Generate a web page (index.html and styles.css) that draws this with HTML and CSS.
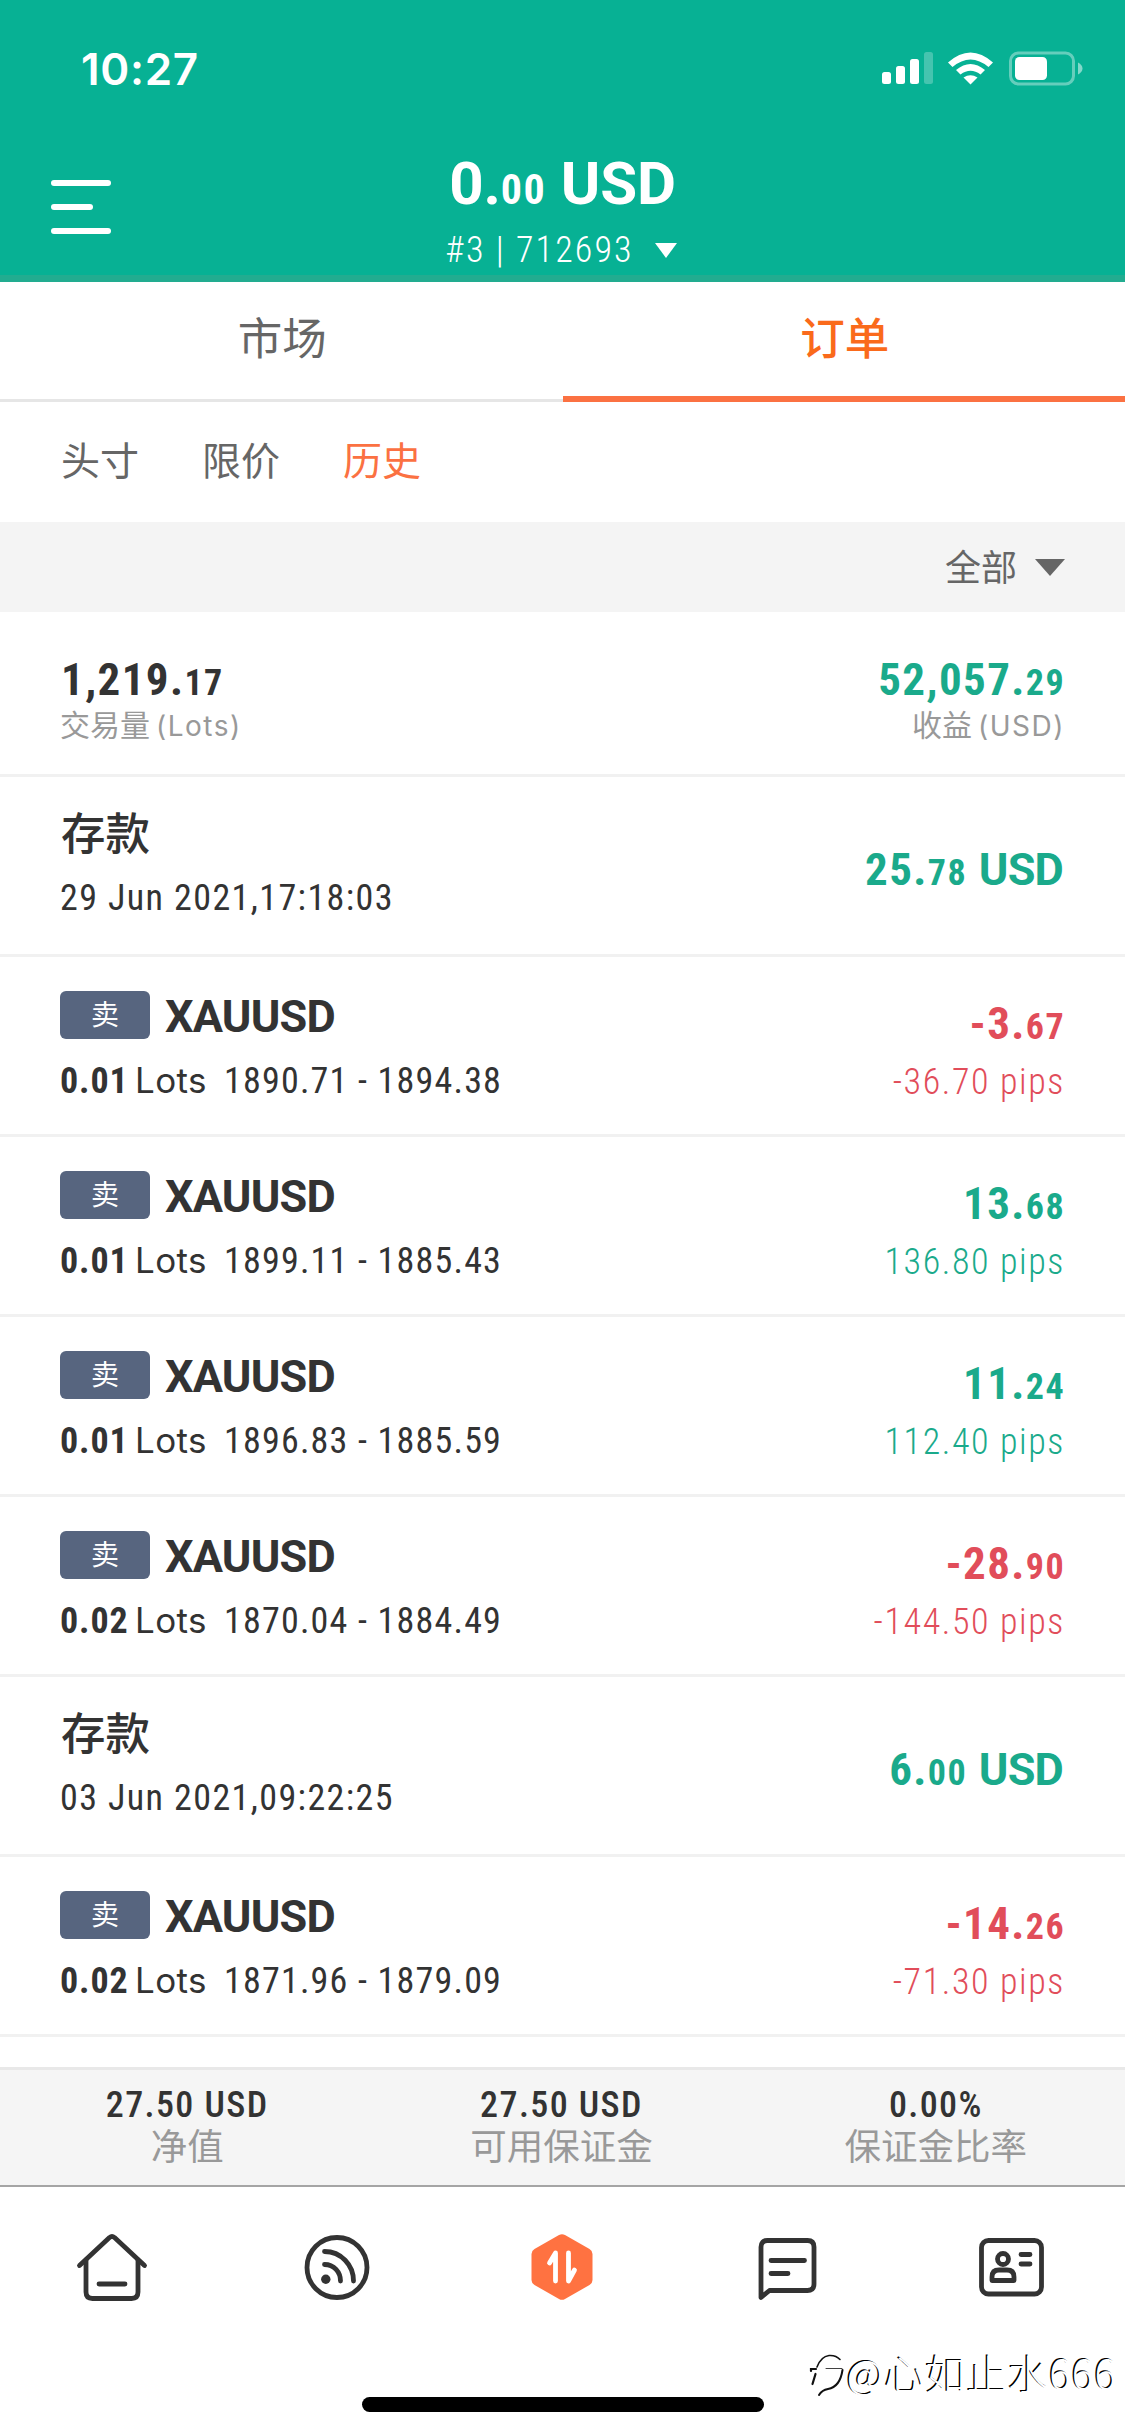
FILE: index.html
```html
<!DOCTYPE html>
<html lang="zh-CN">
<head>
<meta charset="utf-8">
<title>订单</title>
<link rel="stylesheet" href="styles.css">
</head>
<body>
<div class="app">
  <header class="header">
    <div class="status">
      <span class="clock">10:27</span>
      <svg class="status-icons" width="204" height="36" viewBox="0 0 204 36" fill="#fff">
        <rect x="2" y="21" width="9" height="12" rx="2.5"/>
        <rect x="16" y="15" width="9" height="18" rx="2.5"/>
        <rect x="30" y="8" width="9" height="25" rx="2.5"/>
        <rect x="44" y="1" width="9" height="32" rx="2.5" opacity=".25"/>
        <path d="M68 11.500Q90.500-8.500 113 11.500L108.500 16Q90.500 1 72.500 16Z"/>
        <path d="M76 19Q90.500 7 105 19L100.500 23.500Q90.500 16 80.500 23.500Z"/>
        <path d="M83.500 26.500Q90.500 22 97.500 26.500L90.500 33.500Z"/>
        <rect x="130.500" y="2" width="63" height="31" rx="8" fill="none" stroke="#fff" stroke-width="3" opacity=".38"/>
        <rect x="135" y="6" width="32" height="23" rx="4.500"/>
        <path d="M198 11.500Q202.500 14 202.500 17.500T198 23.500Z" opacity=".5"/>
      </svg>
    </div>
    <div class="topbar">
      <div class="menu"><i></i><i></i><i></i></div>
      <div class="account">
        <div class="balance">0.<small>00</small> USD</div>
        <div class="account-id"><span>#3 | 712693</span>
          <svg width="22" height="15" viewBox="0 0 22 15"><path d="M0 0H22L11 15Z" fill="#fff"/></svg>
        </div>
      </div>
    </div>
  </header>

  <nav class="tabs">
    <div class="tab">市场</div>
    <div class="tab active">订单</div>
  </nav>
  <nav class="subtabs"><span>头寸</span><span>限价</span><span class="active">历史</span></nav>
  <div class="filter"><span>全部</span>
    <svg width="30" height="17" viewBox="0 0 30 17"><path d="M0 0H30L15 17Z" fill="#666"/></svg>
  </div>

  <section class="summary">
    <div>
      <div class="amount">1,219.<small>17</small></div>
      <div class="caption">交易量<span>(Lots)</span></div>
    </div>
    <div class="right">
      <div class="amount up">52,057.<small>29</small></div>
      <div class="caption">收益<span>(USD)</span></div>
    </div>
  </section>

  <section class="list">
    <article class="row">
      <div>
        <div class="deposit">存款</div>
        <div class="date">29 Jun 2021,17:18:03</div>
      </div>
      <div class="amount up money">25.<small>78</small> <span>USD</span></div>
    </article>
    <article class="row">
      <div>
        <div class="symbol"><span class="badge">卖</span>XAUUSD</div>
        <div class="detail"><b>0.01</b><span class="lots">Lots</span><span>1890.71 - 1894.38</span></div>
      </div>
      <div class="right result down"><div class="amount">-3.<small>67</small></div><div class="pips">-36.70 pips</div></div>
    </article>
    <article class="row">
      <div>
        <div class="symbol"><span class="badge">卖</span>XAUUSD</div>
        <div class="detail"><b>0.01</b><span class="lots">Lots</span><span>1899.11 - 1885.43</span></div>
      </div>
      <div class="right result up"><div class="amount">13.<small>68</small></div><div class="pips">136.80 pips</div></div>
    </article>
    <article class="row">
      <div>
        <div class="symbol"><span class="badge">卖</span>XAUUSD</div>
        <div class="detail"><b>0.01</b><span class="lots">Lots</span><span>1896.83 - 1885.59</span></div>
      </div>
      <div class="right result up"><div class="amount">11.<small>24</small></div><div class="pips">112.40 pips</div></div>
    </article>
    <article class="row">
      <div>
        <div class="symbol"><span class="badge">卖</span>XAUUSD</div>
        <div class="detail"><b>0.02</b><span class="lots">Lots</span><span>1870.04 - 1884.49</span></div>
      </div>
      <div class="right result down"><div class="amount">-28.<small>90</small></div><div class="pips">-144.50 pips</div></div>
    </article>
    <article class="row">
      <div>
        <div class="deposit">存款</div>
        <div class="date">03 Jun 2021,09:22:25</div>
      </div>
      <div class="amount up money">6.<small>00</small> <span>USD</span></div>
    </article>
    <article class="row">
      <div>
        <div class="symbol"><span class="badge">卖</span>XAUUSD</div>
        <div class="detail"><b>0.02</b><span class="lots">Lots</span><span>1871.96 - 1879.09</span></div>
      </div>
      <div class="right result down"><div class="amount">-14.<small>26</small></div><div class="pips">-71.30 pips</div></div>
    </article>
  </section>

  <section class="equity">
    <div><b>27.50 USD</b><span>净值</span></div>
    <div><b>27.50 USD</b><span>可用保证金</span></div>
    <div><b>0.00%</b><span>保证金比率</span></div>
  </section>

  <nav class="bottom">
    <svg width="80" height="80" viewBox="0 0 80 80" class="icon">
      <path d="M7.500 33.500L37.500 5.500Q40 3.500 42.500 5.500L72.500 33.500"/>
      <path d="M14 28V60Q14 66.500 20.500 66.500H59.500Q66 66.500 66 60V28"/>
      <path d="M27 52H53"/>
    </svg>
    <svg width="80" height="80" viewBox="0 0 80 80" class="icon">
      <circle cx="40" cy="35.500" r="30"/>
      <path d="M27.500 19.500C44 19.500 56.500 33 56.500 49"/>
      <path d="M27.500 32.500C37 32.500 43.500 40 43.500 49"/>
      <circle cx="28.800" cy="47.200" r="4.700" class="solid"/>
    </svg>
    <svg width="80" height="80" viewBox="0 0 80 80" class="icon">
      <path class="hex" d="M37 3Q40 1.300 43 3L67.500 17Q70.500 18.800 70.500 22V48Q70.500 51.200 67.500 53L43 67Q40 68.700 37 67L12.500 53Q9.500 51.200 9.500 48V22Q9.500 18.800 12.500 17Z"/>
      <path class="arrows" d="M33.500 49V21L27.500 31M46.500 21V49L52.500 38"/>
    </svg>
    <svg width="80" height="80" viewBox="0 0 80 80" class="icon">
      <path d="M14 65.500V15Q14 8.500 20.500 8.500H60.500Q67 8.500 67 15V52Q67 58.500 60.500 58.500H22.500Z"/>
      <path d="M24 28.500H57.500M24 41.500H41"/>
    </svg>
    <svg width="80" height="80" viewBox="0 0 80 80" class="icon">
      <rect x="9.500" y="8.500" width="60" height="53.500" rx="7"/>
      <circle cx="31" cy="27" r="5.500"/>
      <path d="M20 48.500V45Q20 38 27 38H35Q42 38 42 45V48.500Z"/>
      <path d="M49 22.500H58M49 32H58"/>
    </svg>
  </nav>
  <div class="home-bar"></div>

  <div class="watermark">
    <svg width="36" height="46" viewBox="0 0 36 46" fill="none" stroke="#111" stroke-linecap="round">
      <path d="M2 18V16H7" stroke-width="2.200"/>
      <path d="M8 14Q12 3.500 20 2.500Q27 2 31 6.500" stroke-width="1.600"/>
      <path d="M6.500 21L3.500 31" stroke-width="2.200"/>
      <path d="M17 15.500H33" stroke-width=".8"/>
      <path d="M33.500 17Q31 34 19 36Q13 37 10 42" stroke-width="2"/>
    </svg><span>@心如止水666</span>
  </div>
</div>
</body>
</html>
```
FILE: styles.css
```css
* { box-sizing: border-box; }
body {
  margin: 0;
  background: #fff;
  color: #333;
  font-family: Roboto, "Noto Sans CJK SC", sans-serif;
  font-stretch: 75%;
}
.app {
  position: relative;
  width: 1125px;
  height: 2436px;
  display: flex;
  flex-direction: column;
  overflow: hidden;
}

/* Header */
.header { height: 282px; background: #07b194; border-bottom: 7px solid #22ac90; color: #fff; }
.status { display: flex; justify-content: space-between; height: 136px; padding: 51px 41px 0 81px; }
.clock { font: 600 44px/36px Inter, sans-serif; letter-spacing: .7px; }
.topbar { display: grid; grid-template-columns: 111px 1fr 111px; }
.menu { display: flex; flex-direction: column; gap: 18px; padding: 44px 0 0 51px; }
.menu i { width: 60px; height: 6px; border-radius: 3px; background: #fff; }
.menu i:nth-child(2) { width: 42px; }
.account { display: flex; flex-direction: column; align-items: center; }
.balance { font-size: 60px; line-height: 60px; font-weight: 700; font-stretch: 100%; letter-spacing: -.2px; padding-top: 18px; }
.balance small { font-size: 42px; font-stretch: 75%; letter-spacing: 1.500px; }
.account-id { display: flex; align-items: center; gap: 21px; font-size: 36px; line-height: 40px; letter-spacing: 2.100px; font-weight: 350; padding: 10px 3px 0 0; }

/* Tabs */
.tabs { display: flex; height: 120px; border-bottom: 3px solid #e6e6e6; }
.tab { width: 50%; text-align: center; font-size: 44.500px; line-height: 117px; color: #666; padding-left: 2px; }
.tab.active { height: 120px; border-bottom: 6px solid #fb7142; color: #fa6a1b; font-weight: 500; }
.subtabs { display: flex; gap: 63px; height: 120px; padding-left: 61px; font-size: 39px; line-height: 121px; color: #666; }
.subtabs .active { color: #fb7142; }
.filter { display: flex; align-items: center; justify-content: flex-end; gap: 18px; height: 90px; padding-right: 60px; background: #f4f4f4; color: #666; font-size: 36px; line-height: 90px; }
.filter span { padding-top: 3px; }

/* Amounts */
.amount { font-size: 45px; line-height: 48px; font-weight: 700; letter-spacing: 1.400px; }
.amount small { font-size: 36px; }
.amount span { font-stretch: 100%; letter-spacing: -.8px; margin-right: 1px; }
.up { color: #1aaa8b; }
.down { color: #e14d5a; }
.right { text-align: right; }
.right .amount, .pips { margin-right: -1px; }

.summary { display: flex; justify-content: space-between; height: 165px; padding: 44px 61px 0; border-bottom: 3px solid #f1f1f1; }
.caption { font-size: 30px; line-height: 38px; color: #999; margin-left: -1px; }
.caption span { font-family: Inter, sans-serif; font-size: 28px; letter-spacing: 1.500px; margin-left: 6px; }
.summary .right .caption { margin-right: -1px; }

/* History rows */
.row { display: flex; justify-content: space-between; height: 180px; padding: 34px 61px 0; border-bottom: 3px solid #f1f1f1; }
.deposit { font-size: 44.500px; line-height: 49px; font-weight: 500; }
.date { font-size: 36px; line-height: 40px; font-weight: 400; letter-spacing: 1.400px; margin: 18px 0 0 -1px; }
.money { padding-top: 35px; }
.symbol { display: flex; align-items: center; gap: 15px; height: 50px; margin-bottom: -2px; font-size: 45px; font-weight: 700; font-stretch: 100%; letter-spacing: -.8px; }
.badge { width: 90px; height: 48px; margin: -2px 0 0 -1px; border-radius: 6px; background: #57657f; color: #fff; font-size: 28px; line-height: 50px; font-weight: 400; text-align: center; letter-spacing: 0; }
.detail { display: flex; margin: 22px 0 0 -1px; font-size: 36px; line-height: 41px; font-weight: 400; letter-spacing: 1.200px; }
.detail b { font-weight: 700; letter-spacing: .9px; width: 75px; }
.lots { width: 89px; font: 400 35px/39px Inter, sans-serif; letter-spacing: .4px; }
.result .amount { padding-top: 9px; }
.pips { font-size: 36px; line-height: 40px; font-weight: 350; letter-spacing: 1.600px; margin-top: 11px; }

/* Equity strip */
.equity { display: grid; grid-template-columns: 1fr 1fr 1fr; margin-top: 30px; height: 120px; padding: 15px 2px 0 0; background: #f5f5f5; border-top: 3px solid #e8e8e8; border-bottom: 2px solid #a5a5a5; text-align: center; }
.equity b, .equity span { display: block; }
.equity b { font-size: 36px; line-height: 40px; font-weight: 500; letter-spacing: 1.400px; }
.equity span { font-size: 36.500px; line-height: 46px; color: #999; }

/* Bottom navigation */
.bottom { display: flex; justify-content: space-around; padding: 45px 1px 0 0; }
.icon { fill: none; stroke: #333; stroke-width: 4.800; stroke-linecap: round; stroke-linejoin: round; }
.icon .solid { fill: #333; stroke: none; }
.icon .hex { fill: #ff7241; stroke: none; }
.icon .arrows { stroke: #fff; }
.home-bar { width: 402px; height: 15px; margin: 85px auto 0; border-radius: 8px; background: #000; }

.watermark { position: absolute; right: 8px; bottom: 34px; display: flex; align-items: center; gap: 2px; font-family: "Noto Sans CJK SC", sans-serif; font-size: 40px; line-height: 46px; font-weight: 300; letter-spacing: 1.200px; color: #fff; }
.watermark span { margin-bottom: 7px; text-shadow: -1.500px -1px 0 #000; }
```
